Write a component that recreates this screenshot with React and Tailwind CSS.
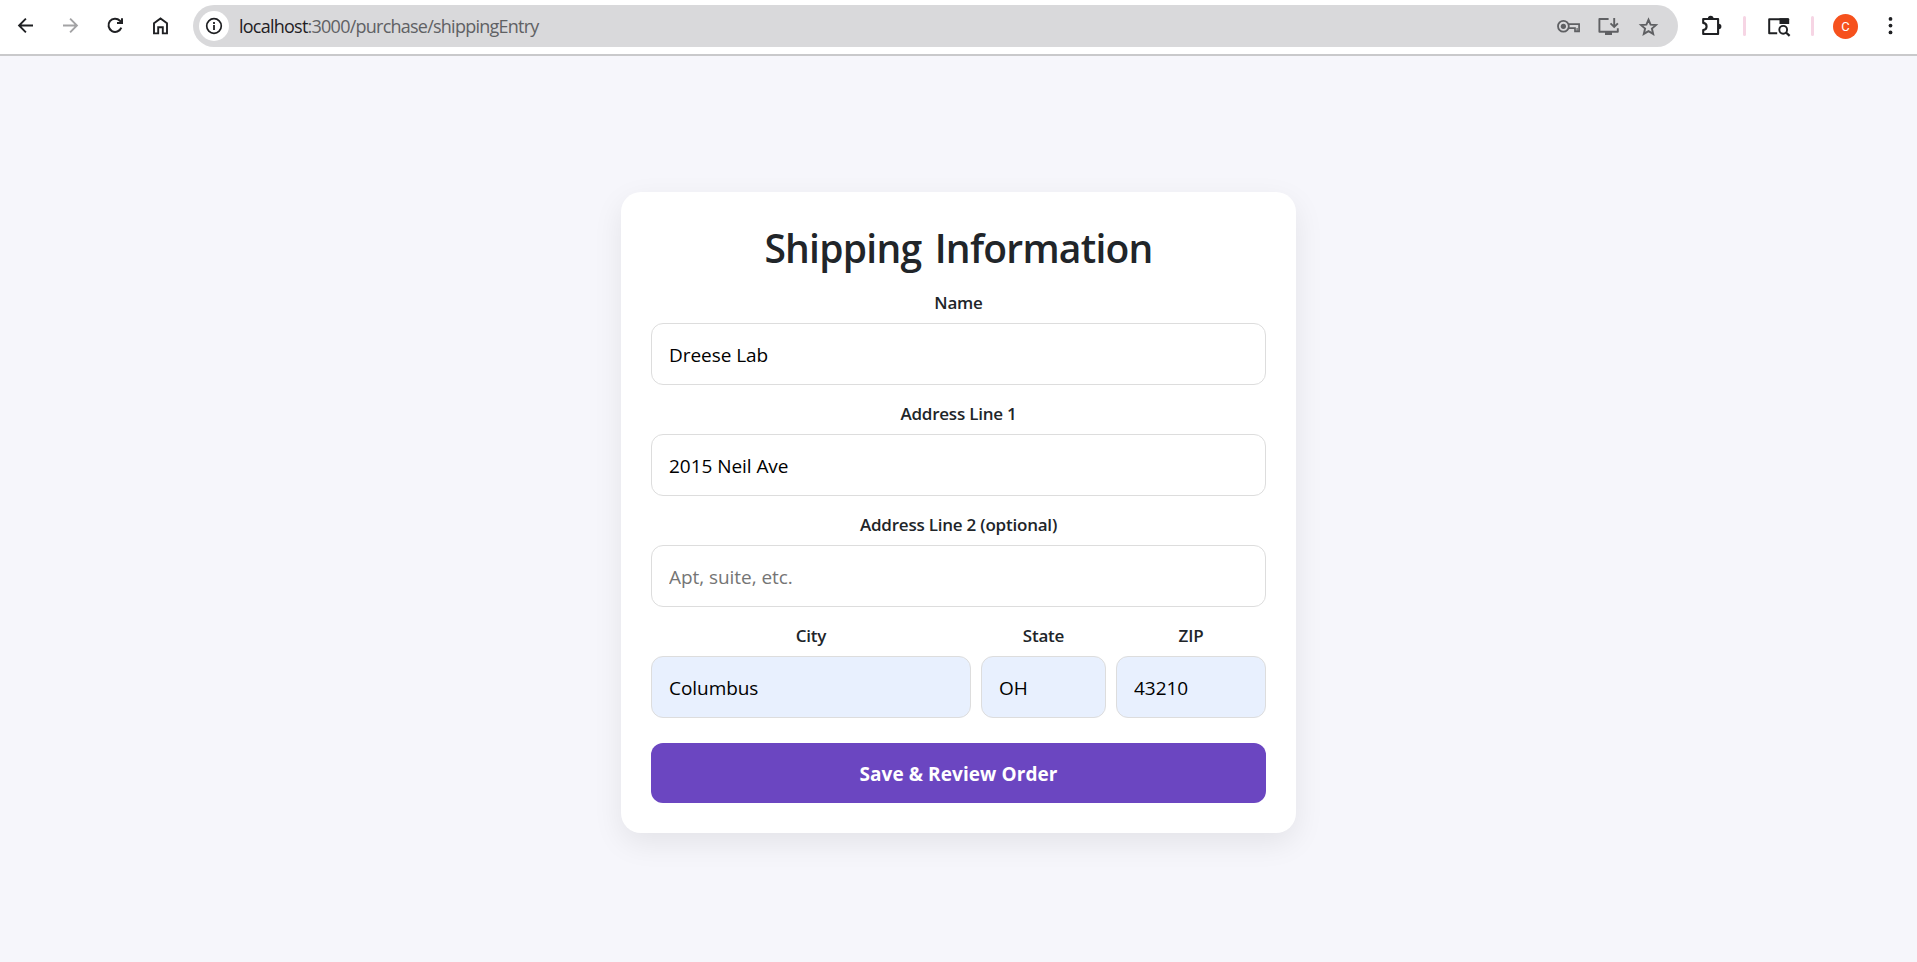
import React from "react";

const stroke = { fill: "none", stroke: "currentColor", strokeWidth: 1.9 };

function Icon({ className = "", children }) {
  return (
    <svg viewBox="0 0 24 24" className={`h-6 w-6 shrink-0 ${className}`}>
      {children}
    </svg>
  );
}

function Toolbar() {
  return (
    <header className="flex h-14 items-start border-b-2 border-[#c9c9cb] bg-white pl-[13px] text-[#1f2023]">
      <div className="flex h-[52px] w-full items-center">
        <nav className="mr-[21px] flex gap-[21px]">
          <Icon>
            <path {...stroke} d="M20 11.5H6.3M12.9 4.7 6.1 11.5l6.8 6.8" />
          </Icon>
          <Icon className="text-[#a3a3a5]">
            <path {...stroke} d="M5 11.5h13.7M12.1 4.7l6.8 6.8-6.8 6.8" />
          </Icon>
          <Icon>
            <path {...stroke} strokeWidth="2" d="M18.3 13.6A6.6 6.6 0 1 1 16.9 6.7L19 8.9M19 4.2V9h-5" />
          </Icon>
          <Icon>
            <path {...stroke} d="M6 19.4V9.3l6.5-4.9L19 9.3v10.1h-4.2v-6.1h-4.6v6.1z" />
          </Icon>
        </nav>

        <div className="flex h-[42px] flex-1 items-center rounded-full bg-[#d9d9db] pl-1.5 pr-[18px]">
          <span className="flex h-[30px] w-[30px] items-center justify-center rounded-full bg-white">
            <Icon>
              <circle cx="12" cy="12" r="7.3" {...stroke} strokeWidth="1.7" />
              <path fill="currentColor" d="M11.1 11h1.8v5h-1.8zM11.1 8h1.8v1.9h-1.8z" />
            </Icon>
          </span>
          <span className="ml-2.5 flex-1 whitespace-nowrap font-['Open_Sans',sans-serif] text-[18px] leading-6 tracking-[-0.76px] text-[#606164]">
            <span className="text-[#1f2023]">localhost</span>:3000/purchase/shippingEntry
          </span>
          <div className="flex gap-4 text-[#5f6063]">
            <Icon>
              <circle cx="7.4" cy="12.3" r="5.4" {...stroke} strokeWidth="1.8" />
              <circle cx="7.4" cy="12.3" r="2.6" fill="currentColor" />
              <path {...stroke} strokeWidth="1.7" d="M12.2 10.2h10.9v7.2h-4.1v-3.2h-6.4" />
              <path {...stroke} strokeWidth="1.2" d="M21.1 14v3.4" />
            </Icon>
            <Icon>
              <path {...stroke} d="M12.6 5H3.4v12.8h18.4v-3.6" strokeLinejoin="round" />
              <path {...stroke} d="M18.2 4v9M14.5 9.3l3.7 3.7 3.7-3.7" />
              <path fill="currentColor" d="M9 17.8h7V21H9z" />
            </Icon>
            <Icon>
              <path
                {...stroke}
                d="m12.5 5.6 2.1 5 5.4.5-4.1 3.5 1.3 5.3-4.7-2.8-4.7 2.8 1.3-5.3L5 11.1l5.4-.5z"
              />
            </Icon>
          </div>
        </div>

        <Icon className="ml-[21px]">
          <path
            {...stroke}
            strokeWidth="2.1"
            strokeLinejoin="round"
            d="M4.2 5h14.9v15H4.2v-3.9c2.1-.3 3.4-1.7 3.4-3.6S6.3 9.2 4.2 8.9z"
          />
          <path fill="currentColor" d="M8.9 4.5a2.8 2.8 0 0 1 5.6 0zM19.6 9.7a2.8 2.8 0 0 1 0 5.6z" />
        </Icon>
        <span className="ml-5 h-5 w-[2.5px] rounded-full bg-[#f6d5e4]" />
        <Icon className="ml-[21.5px]">
          <path {...stroke} strokeWidth="2" strokeLinejoin="round" d="M10.2 19.3h-8V5.2h19.2" />
          <path fill="currentColor" d="M12.5 4.2h8.7a1 1 0 0 1 1 1V10h-9.7z" />
          <circle cx="16.2" cy="15.8" r="3.9" {...stroke} />
          <path {...stroke} strokeWidth="2.2" d="m19 18.5 3.6 3.4" />
        </Icon>
        <span className="ml-5 h-5 w-[2.5px] rounded-full bg-[#f6d5e4]" />
        <span className="ml-[19.5px] flex h-[25px] w-[25px] items-center justify-center rounded-full bg-[#f6511d] font-['Roboto',sans-serif] text-[13px] leading-none text-white">
          C
        </span>
        <Icon className="ml-5 mr-[15px]">
          <g fill="currentColor">
            <circle cx="12.5" cy="4.9" r="1.9" />
            <circle cx="12.5" cy="11.6" r="1.9" />
            <circle cx="12.5" cy="18.4" r="1.9" />
          </g>
        </Icon>
      </div>
    </header>
  );
}

function Field({ label, value, placeholder, autofilled }) {
  return (
    <label className="flex min-w-0 flex-col">
      <span className="flex h-[49px] items-end justify-center pb-2 text-[17px] font-semibold leading-6 tracking-[-0.22px] text-[#212529]">
        {label}
      </span>
      <input
        defaultValue={value}
        placeholder={placeholder}
        className={`h-[62px] w-full rounded-xl border border-[#dddddd] px-[17px] pt-0.5 text-[19px] tracking-[-0.05px] text-black outline-none placeholder:text-[#757575] ${
          autofilled ? "bg-[#e8f0fe]" : "bg-white"
        }`}
      />
    </label>
  );
}

export default function App() {
  return (
    <div className="flex h-[962px] flex-col overflow-hidden bg-[#f6f6fb] font-['Open_Sans','Noto_Sans',sans-serif]">
      <Toolbar />
      <main className="flex flex-1 items-start justify-center pt-[136px]">
        <form className="w-[675px] rounded-[20px] bg-white p-[30px] shadow-[0_10px_30px_rgba(0,0,0,0.08)]">
          <h1 className="h-[52px] text-center text-[39px] font-semibold leading-[51px] tracking-[-0.75px] text-[#212529] [word-spacing:4px]">
            Shipping Information
          </h1>
          <Field label="Name" value="Dreese Lab" />
          <Field label="Address Line 1" value="2015 Neil Ave" />
          <Field label="Address Line 2 (optional)" placeholder="Apt, suite, etc." />
          <div className="grid grid-cols-[320px_125px_150px] gap-2.5">
            <Field label="City" value="Columbus" autofilled />
            <Field label="State" value="OH" autofilled />
            <Field label="ZIP" value="43210" autofilled />
          </div>
          <button
            type="button"
            className="mt-[25px] block h-[60px] w-full rounded-xl bg-[#6b46c1] pt-0.5 text-[19px] font-bold tracking-[0.08px] text-white"
          >
            Save &amp; Review Order
          </button>
        </form>
      </main>
    </div>
  );
}
